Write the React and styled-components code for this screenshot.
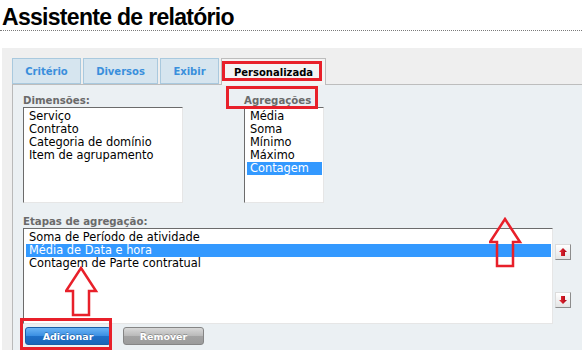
import styled, { createGlobalStyle } from "styled-components";

const GlobalStyle = createGlobalStyle`
  html, body {
    margin: 0;
    padding: 0;
    background: #ffffff;
    font-family: "DejaVu Sans", Verdana, sans-serif;
    overflow: hidden;
  }
`;

const Page = styled.div`
  position: relative;
  width: 582px;
  height: 350px;
  overflow: hidden;
`;

const Title = styled.h1`
  margin: 0;
  padding: 4px 0 0 2px;
  font-family: "Liberation Sans", Arial, sans-serif;
  font-size: 23px;
  letter-spacing: -0.7px;
  line-height: 26px;
  font-weight: bold;
  color: #000;
  border-bottom: 1px dotted #7a7a7a;
`;

const Outer = styled.div`
  margin: 17px 0 0 2px;
  padding: 10px 0 0 10px;
  background: #efefef;
  height: 400px;
`;

const TabRow = styled.div`
  display: flex;
  align-items: flex-end;
  gap: 2px;
  height: 26px;
`;

const Tab = styled.div`
  box-sizing: border-box;
  width: ${(p) => p.$w}px;
  height: ${(p) => (p.$active ? 27 : 26)}px;
  margin-bottom: ${(p) => (p.$active ? -1 : 0)}px;
  display: flex;
  align-items: center;
  justify-content: center;
  font-size: 10px;
  font-weight: bold;
  color: ${(p) => (p.$active ? "#000" : "#3a8fdc")};
  background: ${(p) => (p.$active ? "#f4f4f4" : "#d6e5ef")};
  border: 1px solid ${(p) => (p.$active ? "#bdbdbd" : "#a9c9de")};
  border-bottom: ${(p) => (p.$active ? "none" : "1px solid #a9c9de")};
  position: relative;
  z-index: 1;
`;

const Panel = styled.div`
  background: #ebf0f3;
  border-top: 1px solid #bdbdbd;
  border-left: 1px solid #b9b9b9;
  padding: 9px 0 0 10px;
  height: 300px;
`;

const TopRow = styled.div`
  display: flex;
  gap: 61px;
`;

const Field = styled.div`
  display: flex;
  flex-direction: column;
`;

const Label = styled.div`
  font-size: 10.2px;
  font-weight: bold;
  color: #6a6a6a;
  line-height: 13px;
`;

const ListBox = styled.div`
  box-sizing: border-box;
  width: ${(p) => p.$w}px;
  height: 96px;
  background: #fff;
  border: 1px solid;
  border-color: #6b6b6b #e6e6e6 #e6e6e6 #6b6b6b;
  padding: 2px 1px 0 2px;
`;

const Item = styled.div`
  font-size: 11.4px;
  line-height: 13px;
  padding-left: 3px;
  white-space: nowrap;
  color: ${(p) => (p.$selected ? "#fff" : "#000")};
  background: ${(p) => (p.$selected ? "#3399ff" : "transparent")};
`;

const StepsLabel = styled(Label)`
  margin-top: 12px;
`;

const StepsRow = styled.div`
  display: flex;
  gap: 2px;
`;

const MoveColumn = styled.div`
  display: flex;
  flex-direction: column;
  gap: 32px;
  padding-top: 16px;
`;

const MoveButton = styled.div`
  box-sizing: border-box;
  width: 16px;
  height: 16px;
  background: linear-gradient(#ffffff, #e4e4e4);
  border: 1px solid #a0a0a0;
  border-color: #dcdcdc #8c8c8c #8c8c8c #dcdcdc;
  display: flex;
  align-items: center;
  justify-content: center;
`;

const ButtonRow = styled.div`
  display: flex;
  gap: 12px;
  margin: 3px 0 0 2px;
`;

const Button = styled.div`
  box-sizing: border-box;
  width: ${(p) => p.$w}px;
  height: 18px;
  border-radius: 3px;
  display: flex;
  align-items: center;
  justify-content: center;
  font-size: 9.5px;
  font-weight: bold;
  color: #fff;
  border: 1px solid ${(p) => (p.$primary ? "#1b5ea6" : "#858585")};
  background: ${(p) =>
    p.$primary
      ? "linear-gradient(#6ab4f5, #3a8ee2 50%, #1f70c8 51%, #1b65b8)"
      : "linear-gradient(#d8d8d8, #b9b9b9 50%, #a3a3a3 51%, #9b9b9b)"};
  text-shadow: 0 -1px 0 rgba(0, 0, 0, 0.25);
`;

const Mark = styled.div`
  position: absolute;
  left: ${(p) => p.$x}px;
  top: ${(p) => p.$y}px;
  width: ${(p) => p.$w}px;
  height: ${(p) => p.$h}px;
  box-sizing: border-box;
  border: 3px solid #e8202a;
  pointer-events: none;
  z-index: 5;
`;

const ArrowMark = styled.svg`
  position: absolute;
  left: ${(p) => p.$x}px;
  top: ${(p) => p.$y}px;
  z-index: 5;
  pointer-events: none;
`;

const SmallArrow = ({ down }) => (
  <svg width="10" height="10" viewBox="0 0 10 10">
    <defs>
      <linearGradient id={down ? "gd" : "gu"} x1="0" y1="0" x2="1" y2="0">
        <stop offset="0" stopColor="#f03038" />
        <stop offset="1" stopColor="#a30010" />
      </linearGradient>
    </defs>
    <polygon
      points={down ? "3,1 7,1 7,5 9,5 5,9 1,5 3,5" : "5,1 9,5 7,5 7,9 3,9 3,5 1,5"}
      fill={`url(#${down ? "gd" : "gu"})`}
    />
  </svg>
);

const BigArrow = ({ x, y }) => (
  <ArrowMark $x={x} $y={y} width="34" height="52" viewBox="0 0 34 52">
    <polygon
      points="16,2 31,25 24,25 24,49 8,49 8,25 1,25"
      fill="none"
      stroke="#e8202a"
      strokeWidth="2.5"
      strokeLinejoin="miter"
    />
  </ArrowMark>
);

const dims = ["Serviço", "Contrato", "Categoria de domínio", "Item de agrupamento"];
const aggs = ["Média", "Soma", "Mínimo", "Máximo", "Contagem"];
const steps = [
  "Soma de Período de atividade",
  "Média de Data e hora",
  "Contagem de Parte contratual",
];

export default function App() {
  return (
    <Page>
      <GlobalStyle />
      <Title>Assistente de relatório</Title>
      <Outer>
        <TabRow>
          <Tab $w={69}>Critério</Tab>
          <Tab $w={75}>Diversos</Tab>
          <Tab $w={59}>Exibir</Tab>
          <Tab $w={105} $active>
            Personalizada
          </Tab>
        </TabRow>
        <Panel>
          <TopRow>
            <Field>
              <Label>Dimensões:</Label>
              <ListBox $w={160}>
                {dims.map((d) => (
                  <Item key={d}>{d}</Item>
                ))}
              </ListBox>
            </Field>
            <Field>
              <Label>Agregações</Label>
              <ListBox $w={80}>
                {aggs.map((a) => (
                  <Item key={a} $selected={a === "Contagem"}>
                    {a}
                  </Item>
                ))}
              </ListBox>
            </Field>
          </TopRow>
          <StepsLabel>Etapas de agregação:</StepsLabel>
          <StepsRow>
            <ListBox $w={530}>
              {steps.map((s, i) => (
                <Item key={s} $selected={i === 1}>
                  {s}
                </Item>
              ))}
            </ListBox>
            <MoveColumn>
              <MoveButton>
                <SmallArrow />
              </MoveButton>
              <MoveButton>
                <SmallArrow down />
              </MoveButton>
            </MoveColumn>
          </StepsRow>
          <ButtonRow>
            <Button $w={86} $primary>
              Adicionar
            </Button>
            <Button $w={81}>Remover</Button>
          </ButtonRow>
        </Panel>
      </Outer>

      <Mark $x={222} $y={61} $w={100} $h={20} />
      <Mark $x={226} $y={86} $w={92} $h={23} />
      <Mark $x={20} $y={318} $w={92} $h={32} />
      <BigArrow x={489} y={217} />
      <BigArrow x={65} y={266} />
    </Page>
  );
}
